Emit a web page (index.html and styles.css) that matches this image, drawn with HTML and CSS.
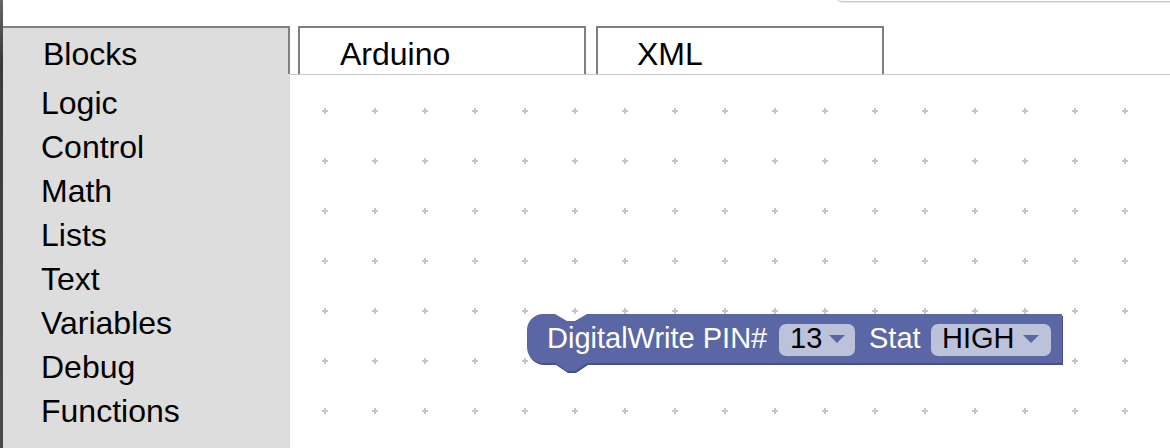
FILE: index.html
```html
<!DOCTYPE html>
<html lang="en">
<head>
<meta charset="utf-8">
<title>Blocks</title>
<link rel="stylesheet" href="styles.css">
</head>
<body>
<div class="app">
  <div class="edge"></div>
  <div class="main">
    <div class="topbar">
      <div class="search"></div>
    </div>
    <div class="tabs">
      <div class="tab tab-active">Blocks</div>
      <div class="tab tab-arduino">Arduino</div>
      <div class="tab tab-xml">XML</div>
    </div>
    <div class="content">
      <ul class="toolbox">
        <li>Logic</li>
        <li>Control</li>
        <li>Math</li>
        <li>Lists</li>
        <li>Text</li>
        <li>Variables</li>
        <li>Debug</li>
        <li>Functions</li>
      </ul>
      <div class="workspace">
        <svg class="canvas" width="880" height="373" viewBox="0 0 880 373">
          <defs>
            <pattern id="grid" patternUnits="userSpaceOnUse" width="50" height="50">
              <rect x="32" y="35" width="6" height="2" fill="#c6c6c6"/>
              <rect x="34" y="33" width="2" height="6" fill="#c6c6c6"/>
            </pattern>
          </defs>
          <rect width="880" height="373" fill="url(#grid)"/>
          <g transform="translate(237,239)">
            <path transform="translate(1,2)" fill="#48528a" d="M 0,16 A 16 16 0 0 1 16,0 H 28 l 12,7 h 8 l 12,-7 H 535 V 49 H 60 l -12,8 h -8 l -12,-8 H 16 A 16 16 0 0 1 0,33 Z"/>
            <path fill="#5b67a5" d="M 0,16 A 16 16 0 0 1 16,0 H 28 l 12,7 h 8 l 12,-7 H 535 V 49 H 60 l -12,8 h -8 l -12,-8 H 16 A 16 16 0 0 1 0,33 Z"/>
            <text class="blk-text" x="20" y="34">DigitalWrite PIN#</text>
            <rect x="252" y="10" width="76" height="32" rx="7" fill="#bdc2db"/>
            <text class="fld-text" x="263" y="34">13</text>
            <polygon points="302,21 318,21 310,29" fill="#5b67a5"/>
            <text class="blk-text" x="342" y="34">Stat</text>
            <rect x="404" y="10" width="120" height="32" rx="7" fill="#bdc2db"/>
            <text class="fld-text" x="415" y="34">HIGH</text>
            <polygon points="496,21 512,21 504,29" fill="#5b67a5"/>
          </g>
        </svg>
      </div>
    </div>
  </div>
</div>
</body>
</html>
```

FILE: styles.css
```css
* { box-sizing: border-box; }

html, body {
  margin: 0;
  padding: 0;
  width: 1170px;
  height: 448px;
  overflow: hidden;
  background: #ffffff;
  font-family: "Liberation Sans", Arial, Helvetica, sans-serif;
  color: #000;
}

.app {
  display: flex;
  width: 1170px;
  height: 448px;
}

.edge {
  width: 3px;
  flex: none;
  background: linear-gradient(#666 0, #555 26px, #3a3a3a 60px, #4a4a4a 100%);
}

.main {
  flex: 1;
  display: flex;
  flex-direction: column;
  min-width: 0;
}

.topbar {
  height: 26px;
  flex: none;
  display: flex;
  justify-content: flex-end;
}

.search {
  width: 342px;
  height: 30px;
  margin-top: -28px;
  margin-right: -8px;
  border: 1px solid #c9c9c9;
  border-radius: 6px;
  box-shadow: 0 1px 1px rgba(0,0,0,0.08);
}

.tabs {
  height: 48px;
  flex: none;
  display: flex;
}

.tab {
  width: 288px;
  height: 48px;
  border-top: 2px solid #808080;
  border-left: 2px solid #808080;
  border-right: 2px solid #808080;
  font-size: 32px;
  line-height: 39px;
  padding-top: 7px;
  padding-left: 40px;
  background: #fff;
}

.tab-active {
  width: 287px;
  border-left: none;
  background: #dddddd;
}

.tab-arduino { margin-left: 8px; }
.tab-xml { margin-left: 10px; padding-left: 39px; }

.content {
  flex: 1;
  display: flex;
  min-height: 0;
}

.toolbox {
  width: 287px;
  flex: none;
  margin: 0;
  padding: 7px 0 0 38px;
  list-style: none;
  background: #dddddd;
  font-size: 32px;
  line-height: 44px;
}

.workspace {
  flex: 1;
  border-top: 1px solid #c8c8c8;
  position: relative;
  overflow: hidden;
  background: #fff;
}

.canvas {
  display: block;
}

.blk-text {
  font-family: "Liberation Sans", Arial, sans-serif;
  font-size: 29px;
  fill: #ffffff;
}

.fld-text {
  font-family: "Liberation Sans", Arial, sans-serif;
  font-size: 29px;
  fill: #000000;
}
```
